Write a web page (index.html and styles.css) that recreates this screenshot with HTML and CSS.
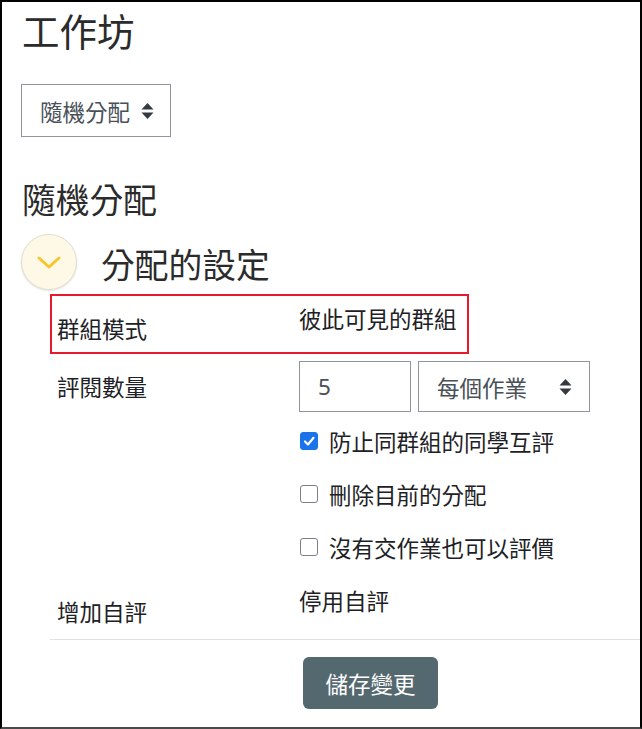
FILE: index.html
```html
<!DOCTYPE html>
<html lang="zh-Hant">
<head>
<meta charset="utf-8">
<title>工作坊</title>
<link rel="stylesheet" href="styles.css">
</head>
<body>
<div class="frame">
  <h2 class="title">工作坊</h2>
  <div class="select jump">
    <span class="select-text">隨機分配</span>
    <svg class="sort" width="13" height="18" viewBox="0 0 13 18"><path d="M6.5 1 L12.5 7.5 H0.5 Z M6.5 17 L12.5 10.5 H0.5 Z" fill="#343a40"/></svg>
  </div>
  <h3 class="subtitle">隨機分配</h3>
  <div class="section-head">
    <span class="toggle"><svg width="24" height="14" viewBox="0 0 24 14"><polyline points="2,2 12,11 22,2" fill="none" stroke="#f7c52c" stroke-width="3" stroke-linecap="round" stroke-linejoin="round"/></svg></span>
    <h3 class="section-title">分配的設定</h3>
  </div>
  <div class="form">
    <div class="row highlight">
      <div class="label label-low">群組模式</div>
      <div class="value value-top">彼此可見的群組</div>
    </div>
    <div class="row">
      <div class="label label-mid">評閱數量</div>
      <div class="value">
        <div class="inputs">
          <div class="input num">5</div>
          <div class="select per">
            <span class="select-text">每個作業</span>
            <svg class="sort" width="13" height="18" viewBox="0 0 13 18"><path d="M6.5 1 L12.5 7.5 H0.5 Z M6.5 17 L12.5 10.5 H0.5 Z" fill="#343a40"/></svg>
          </div>
        </div>
        <div class="checks">
          <label class="check"><span class="cb checked"><svg width="14" height="14" viewBox="0 0 14 14"><polyline points="3,7.5 6,10.5 11.5,3.8" fill="none" stroke="#fff" stroke-width="2.2" stroke-linecap="round" stroke-linejoin="round"/></svg></span>防止同群組的同學互評</label>
          <label class="check"><span class="cb"></span>刪除目前的分配</label>
          <label class="check"><span class="cb"></span>沒有交作業也可以評價</label>
        </div>
      </div>
    </div>
    <div class="row">
      <div class="label label-self">增加自評</div>
      <div class="value value-self">停用自評</div>
    </div>
    <div class="divider"></div>
    <div class="actions">
      <button class="btn" type="button">儲存變更</button>
    </div>
  </div>
</div>
</body>
</html>
```
FILE: styles.css
```css
* { box-sizing: border-box; }
html, body { margin: 0; padding: 0; background: #fff; }
body {
  font-family: "Noto Sans CJK TC", "Noto Sans", "Liberation Sans", sans-serif;
  color: #1d2125;
  font-size: 22.5px;
}
.frame {
  width: 642px;
  height: 729px;
  border: 2px solid #000;
  border-bottom-color: #4a4a4a;
  padding-left: 20px;
  overflow: hidden;
}
.title {
  margin: 5px 0 0;
  font-size: 37.5px;
  line-height: 45px;
  font-weight: 400;
  color: #2b2b2b;
}
.select {
  display: flex;
  align-items: center;
  justify-content: space-between;
  border: 1px solid #8f959e;
  background: #fff;
  color: #495057;
  line-height: 34px;
}
.jump {
  margin-top: 32px;
  width: 150px;
  height: 53px;
  padding: 0 16px 0 18px;
  margin-left: -1px;
}
.subtitle {
  margin: 42px 0 0;
  font-size: 33.75px;
  line-height: 40px;
  font-weight: 400;
  color: #2b2b2b;
}
.section-head {
  display: flex;
  align-items: center;
  gap: 24px;
  margin-top: 15px;
  margin-left: -1px;
}
.toggle {
  width: 56px;
  height: 56px;
  border-radius: 50%;
  background: #fef9e6;
  border: 1px solid #e2ded0;
  box-shadow: 0 1px 2px rgba(0,0,0,0.12);
  display: flex;
  align-items: center;
  justify-content: center;
  padding-top: 2px;
}
.section-title {
  margin: 4px 0 0;
  font-size: 33.75px;
  line-height: 40px;
  font-weight: 400;
  color: #2b2b2b;
}
.form {
  margin-top: 4px;
  margin-left: 28px;
}
.row {
  display: grid;
  grid-template-columns: 242px 1fr;
  padding-left: 7px;
  line-height: 34px;
}
.row.highlight {
  width: 419px;
  height: 60px;
  border: 2px solid #e8192c;
  padding-left: 5px;
}
.label-low { padding-top: 15px; }
.value-top { padding-top: 5px; }
.label-mid { padding-top: 15px; }
.inputs {
  display: flex;
  gap: 7px;
  margin-top: 7px;
}
.input {
  height: 51px;
  border: 1px solid #8f959e;
  color: #495057;
  display: flex;
  align-items: center;
}
.num {
  width: 112px;
  padding-left: 18px;
  font-family: "Noto Sans", "Liberation Sans", sans-serif;
}
.per {
  width: 172px;
  height: 51px;
  padding: 0 17px 0 18px;
}
.checks {
  margin-top: 12px;
  display: flex;
  flex-direction: column;
  gap: 19px;
}
.check {
  display: flex;
  align-items: center;
  gap: 11px;
  height: 34px;
  margin-left: 1px;
}
.cb {
  width: 18px;
  height: 18px;
  border: 1.5px solid #7a7f85;
  border-radius: 3px;
  display: flex;
  align-items: center;
  justify-content: center;
  flex: none;
}
.cb.checked {
  background: #1a73e8;
  border-color: #1a73e8;
}
.label-self { padding-top: 30px; }
.value-self { padding-top: 19px; }
.divider {
  height: 1px;
  background: #dee2e6;
  margin-top: 11px;
}
.actions {
  margin-top: 17px;
  padding-left: 253px;
}
.btn {
  width: 135px;
  height: 52px;
  border: none;
  border-radius: 6px;
  background: #546870;
  color: #fff;
  font-family: inherit;
  font-size: 22.5px;
  padding: 0;
}
```
